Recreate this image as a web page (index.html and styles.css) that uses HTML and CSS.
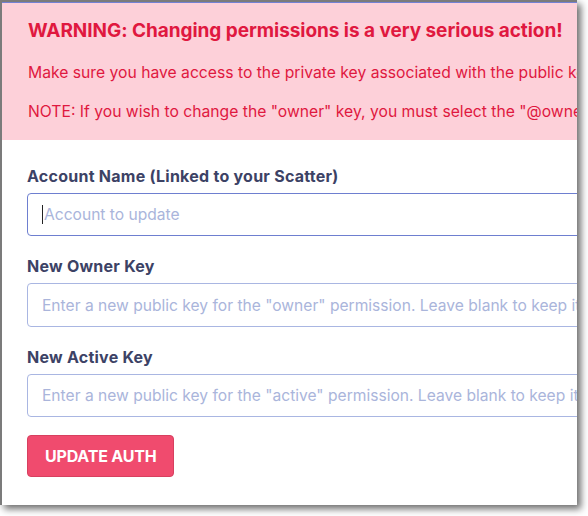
FILE: index.html
```html
<!DOCTYPE html>
<html>
<head>
<meta charset="utf-8">
<link rel="stylesheet" href="styles.css">
</head>
<body>
<div class="frame">
  <div class="panel">
    <div class="alert">
      <h2 class="alert-title">WARNING: Changing permissions is a very serious action!</h2>
      <p class="alert-text">Make sure you have access to the private key associated with the public key you are setting.</p>
      <p class="alert-text">NOTE: If you wish to change the "owner" key, you must select the "@owner" permission in Scatter.</p>
    </div>
    <form class="form">
      <label class="label">Account Name (Linked to your Scatter)</label>
      <div class="input focused"><span class="caret"></span><span class="ph">Account to update</span></div>
      <label class="label">New Owner Key</label>
      <div class="input tall"><span class="ph">Enter a new public key for the "owner" permission. Leave blank to keep it the same.</span></div>
      <label class="label">New Active Key</label>
      <div class="input"><span class="ph">Enter a new public key for the "active" permission. Leave blank to keep it the same.</span></div>
      <div class="actions"><button type="button" class="btn">UPDATE AUTH</button></div>
    </form>
  </div>
</div>
</body>
</html>
```
FILE: styles.css
```css
html, body {
  margin: 0;
  padding: 0;
  background: #ffffff;
}
body {
  font-family: "Inter", "Liberation Sans", sans-serif;
  width: 588px;
  height: 516px;
  overflow: hidden;
}
.frame {
  width: 575px;
  height: 503px;
  border-left: 2px solid #7b7b7b;
  border-top: 2px solid #7b7b7b;
  box-shadow: 4px 4px 7px #6f6f6f;
  background: #ffffff;
}
.panel {
  border-top: 1px solid #7381d4;
  height: 502px;
  overflow: hidden;
}
.alert {
  background: #fdd0d9;
  color: #e0183f;
  padding: 16px 26px 0;
  height: 121px;
  white-space: nowrap;
}
.alert-title {
  margin: 0 0 18px;
  font-size: 19px;
  font-weight: 700;
  line-height: 24px;
  letter-spacing: -0.05px;
}
.alert-text {
  margin: 0 0 15px;
  font-size: 15.7px;
  line-height: 24px;
}
.form {
  padding: 24px 0 0 25px;
  display: flex;
  flex-direction: column;
}
.label {
  color: #3c4265;
  font-weight: 700;
  font-size: 16px;
  line-height: 24px;
  letter-spacing: 0.25px;
  margin-bottom: 5px;
}
.input {
  box-sizing: border-box;
  height: 43px;
  width: 600px;
  border: 1px solid #a9b6e2;
  border-radius: 4px;
  padding: 0 14px;
  display: flex;
  align-items: center;
  white-space: nowrap;
  margin-bottom: 18px;
  font-size: 15.6px;
}
.input.tall {
  height: 44px;
}
.input.focused {
  border-color: #6e7fd0;
}
.ph {
  color: #aab5db;
}
.caret {
  display: inline-block;
  width: 1px;
  height: 19px;
  background: #222;
  margin-right: 1px;
}
.actions {
  padding-top: 0;
}
.btn {
  height: 42px;
  padding: 0 17px;
  background: #f04b6e;
  border: 1px solid #d7405f;
  border-radius: 4px;
  color: #ffffff;
  font-family: inherit;
  font-size: 16px;
  font-weight: 700;
  letter-spacing: -0.2px;
}
```
